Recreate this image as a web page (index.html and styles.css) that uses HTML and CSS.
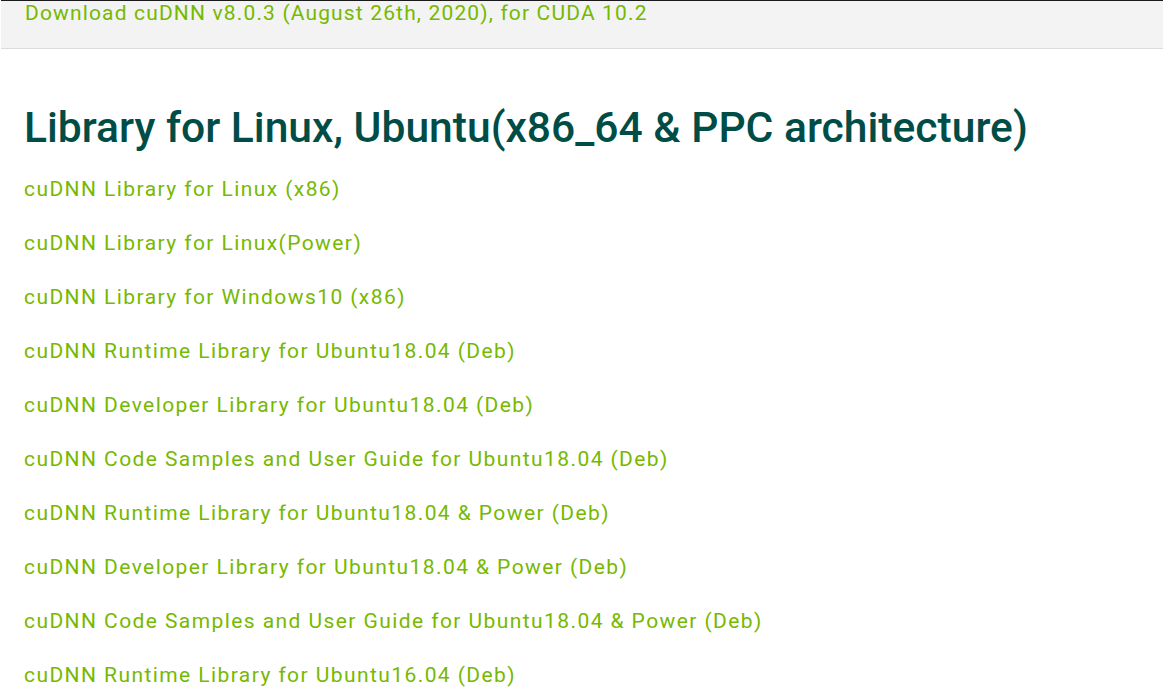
FILE: index.html
```html
<!DOCTYPE html>
<html lang="en">
<head>
<meta charset="utf-8">
<title>cuDNN Archive</title>
<link rel="stylesheet" href="styles.css">
</head>
<body>
<div class="topbar">
  <a class="toplink" href="#">Download cuDNN v8.0.3 (August 26th, 2020), for CUDA 10.2</a>
</div>
<main class="content">
  <h2 class="title">Library for Linux, Ubuntu(x86_64 &amp; PPC architecture)</h2>
  <ul class="links">
    <li><a href="#">cuDNN Library for Linux (x86)</a></li>
    <li><a href="#">cuDNN Library for Linux(Power)</a></li>
    <li><a href="#">cuDNN Library for Windows10 (x86)</a></li>
    <li><a href="#">cuDNN Runtime Library for Ubuntu18.04 (Deb)</a></li>
    <li><a href="#">cuDNN Developer Library for Ubuntu18.04 (Deb)</a></li>
    <li><a href="#">cuDNN Code Samples and User Guide for Ubuntu18.04 (Deb)</a></li>
    <li><a href="#">cuDNN Runtime Library for Ubuntu18.04 &amp; Power (Deb)</a></li>
    <li><a href="#">cuDNN Developer Library for Ubuntu18.04 &amp; Power (Deb)</a></li>
    <li><a href="#">cuDNN Code Samples and User Guide for Ubuntu18.04 &amp; Power (Deb)</a></li>
    <li><a href="#">cuDNN Runtime Library for Ubuntu16.04 (Deb)</a></li>
  </ul>
</main>
</body>
</html>
```
FILE: styles.css
```css
html, body {
  margin: 0;
  padding: 0;
  background: #ffffff;
  font-family: Roboto, "Liberation Sans", sans-serif;
  overflow: hidden;
}

.topbar {
  height: 47px;
  background: #f3f3f3;
  border-top: 1px solid #1a1a1a;
  border-bottom: 1px solid #dcdcdc;
  padding: 0 24px;
  margin-left: 1px;
}

.toplink {
  display: block;
  color: #76b900;
  text-decoration: none;
  font-size: 21px;
  letter-spacing: 1.15px;
  line-height: 26px;
  margin-top: -1px;
}

.content {
  padding: 0 24px;
}

.title {
  margin: 50px 0 0;
  font-size: 42.6px;
  font-weight: 500;
  line-height: 57px;
  color: #004d47;
}

.links {
  list-style: none;
  margin: 18px 0 0;
  padding: 0;
}

.links li {
  height: 54px;
  font-size: 21px;
  letter-spacing: 1.42px;
  line-height: 30px;
}

.links a {
  color: #76b900;
  text-decoration: none;
}
```
